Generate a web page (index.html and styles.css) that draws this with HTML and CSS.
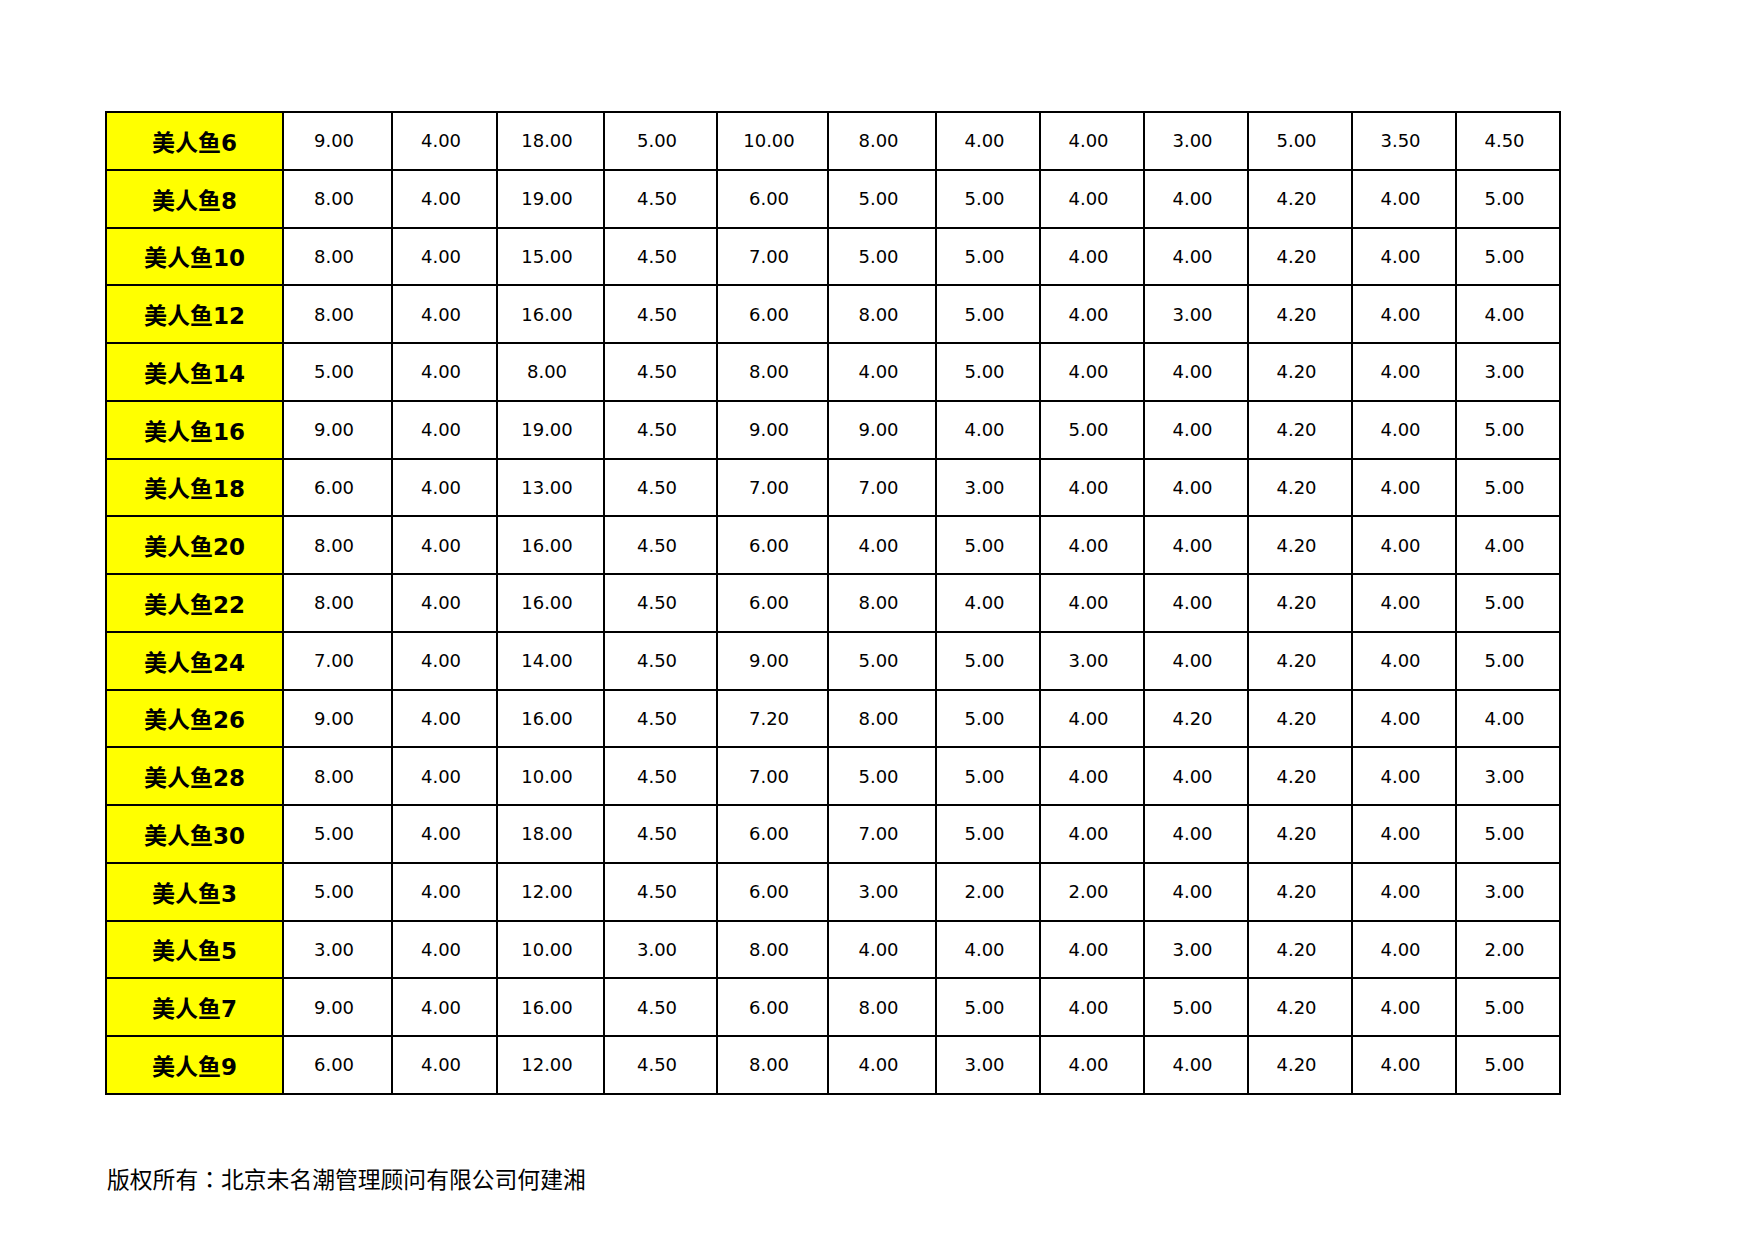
FILE: index.html
```html
<!DOCTYPE html>
<html lang="zh-CN">
<head>
<meta charset="utf-8">
<title>美人鱼</title>
<link rel="stylesheet" href="styles.css">
</head>
<body>
<main class="page">
<table class="grid">
<colgroup>
<col class="c1"><col class="c2"><col class="c3"><col class="c4"><col class="c5"><col class="c6"><col class="c7"><col class="cn"><col class="cn"><col class="cn"><col class="cn"><col class="cn"><col class="cn">
</colgroup>
<tbody>
<tr><th>美人鱼6</th><td>9.00</td><td>4.00</td><td>18.00</td><td>5.00</td><td>10.00</td><td>8.00</td><td>4.00</td><td>4.00</td><td>3.00</td><td>5.00</td><td>3.50</td><td>4.50</td></tr>
<tr><th>美人鱼8</th><td>8.00</td><td>4.00</td><td>19.00</td><td>4.50</td><td>6.00</td><td>5.00</td><td>5.00</td><td>4.00</td><td>4.00</td><td>4.20</td><td>4.00</td><td>5.00</td></tr>
<tr><th>美人鱼10</th><td>8.00</td><td>4.00</td><td>15.00</td><td>4.50</td><td>7.00</td><td>5.00</td><td>5.00</td><td>4.00</td><td>4.00</td><td>4.20</td><td>4.00</td><td>5.00</td></tr>
<tr><th>美人鱼12</th><td>8.00</td><td>4.00</td><td>16.00</td><td>4.50</td><td>6.00</td><td>8.00</td><td>5.00</td><td>4.00</td><td>3.00</td><td>4.20</td><td>4.00</td><td>4.00</td></tr>
<tr><th>美人鱼14</th><td>5.00</td><td>4.00</td><td>8.00</td><td>4.50</td><td>8.00</td><td>4.00</td><td>5.00</td><td>4.00</td><td>4.00</td><td>4.20</td><td>4.00</td><td>3.00</td></tr>
<tr><th>美人鱼16</th><td>9.00</td><td>4.00</td><td>19.00</td><td>4.50</td><td>9.00</td><td>9.00</td><td>4.00</td><td>5.00</td><td>4.00</td><td>4.20</td><td>4.00</td><td>5.00</td></tr>
<tr><th>美人鱼18</th><td>6.00</td><td>4.00</td><td>13.00</td><td>4.50</td><td>7.00</td><td>7.00</td><td>3.00</td><td>4.00</td><td>4.00</td><td>4.20</td><td>4.00</td><td>5.00</td></tr>
<tr><th>美人鱼20</th><td>8.00</td><td>4.00</td><td>16.00</td><td>4.50</td><td>6.00</td><td>4.00</td><td>5.00</td><td>4.00</td><td>4.00</td><td>4.20</td><td>4.00</td><td>4.00</td></tr>
<tr><th>美人鱼22</th><td>8.00</td><td>4.00</td><td>16.00</td><td>4.50</td><td>6.00</td><td>8.00</td><td>4.00</td><td>4.00</td><td>4.00</td><td>4.20</td><td>4.00</td><td>5.00</td></tr>
<tr><th>美人鱼24</th><td>7.00</td><td>4.00</td><td>14.00</td><td>4.50</td><td>9.00</td><td>5.00</td><td>5.00</td><td>3.00</td><td>4.00</td><td>4.20</td><td>4.00</td><td>5.00</td></tr>
<tr><th>美人鱼26</th><td>9.00</td><td>4.00</td><td>16.00</td><td>4.50</td><td>7.20</td><td>8.00</td><td>5.00</td><td>4.00</td><td>4.20</td><td>4.20</td><td>4.00</td><td>4.00</td></tr>
<tr><th>美人鱼28</th><td>8.00</td><td>4.00</td><td>10.00</td><td>4.50</td><td>7.00</td><td>5.00</td><td>5.00</td><td>4.00</td><td>4.00</td><td>4.20</td><td>4.00</td><td>3.00</td></tr>
<tr><th>美人鱼30</th><td>5.00</td><td>4.00</td><td>18.00</td><td>4.50</td><td>6.00</td><td>7.00</td><td>5.00</td><td>4.00</td><td>4.00</td><td>4.20</td><td>4.00</td><td>5.00</td></tr>
<tr><th>美人鱼3</th><td>5.00</td><td>4.00</td><td>12.00</td><td>4.50</td><td>6.00</td><td>3.00</td><td>2.00</td><td>2.00</td><td>4.00</td><td>4.20</td><td>4.00</td><td>3.00</td></tr>
<tr><th>美人鱼5</th><td>3.00</td><td>4.00</td><td>10.00</td><td>3.00</td><td>8.00</td><td>4.00</td><td>4.00</td><td>4.00</td><td>3.00</td><td>4.20</td><td>4.00</td><td>2.00</td></tr>
<tr><th>美人鱼7</th><td>9.00</td><td>4.00</td><td>16.00</td><td>4.50</td><td>6.00</td><td>8.00</td><td>5.00</td><td>4.00</td><td>5.00</td><td>4.20</td><td>4.00</td><td>5.00</td></tr>
<tr><th>美人鱼9</th><td>6.00</td><td>4.00</td><td>12.00</td><td>4.50</td><td>8.00</td><td>4.00</td><td>3.00</td><td>4.00</td><td>4.00</td><td>4.20</td><td>4.00</td><td>5.00</td></tr>
</tbody>
</table>
<p class="footer">版权所有<span class="colon" lang="ja">：</span>北京未名潮管理顾问有限公司何建湘</p>
</main>
</body>
</html>
```
FILE: styles.css
```css
html, body {
  margin: 0;
  padding: 0;
  background: #fff;
}

.page {
  padding: 111px 0 0 105px;
  font-family: "DejaVu Sans", "Noto Sans CJK SC", sans-serif;
  color: #000;
}

.grid {
  border-collapse: separate;
  border-spacing: 0;
  table-layout: fixed;
  width: 1456px;
  border-left: 2px solid #000;
  border-top: 2px solid #000;
}

.c1 { width: 177px; }
.c2 { width: 109px; }
.c3 { width: 105px; }
.c4 { width: 107px; }
.c5 { width: 113px; }
.c6 { width: 111px; }
.c7 { width: 108px; }
.cn { width: 104px; }

.grid th,
.grid td {
  box-sizing: border-box;
  height: 57.75px;
  padding: 0;
  border-right: 2px solid #000;
  border-bottom: 2px solid #000;
  text-align: center;
  vertical-align: middle;
}

.grid th {
  background: #ffff00;
  font-family: "DejaVu Sans", "Noto Sans CJK SC", sans-serif;
  font-weight: bold;
  font-size: 23px;
}

.grid td {
  font-size: 18px;
  font-weight: normal;
  padding-right: 7px;
}

.footer {
  margin: 0;
  padding: 69px 0 0 2px;
  font-family: "Noto Sans CJK SC", sans-serif;
  font-size: 22.8px;
  line-height: 30px;
}

.colon {
  font-family: "Noto Sans CJK JP", sans-serif;
}
```
